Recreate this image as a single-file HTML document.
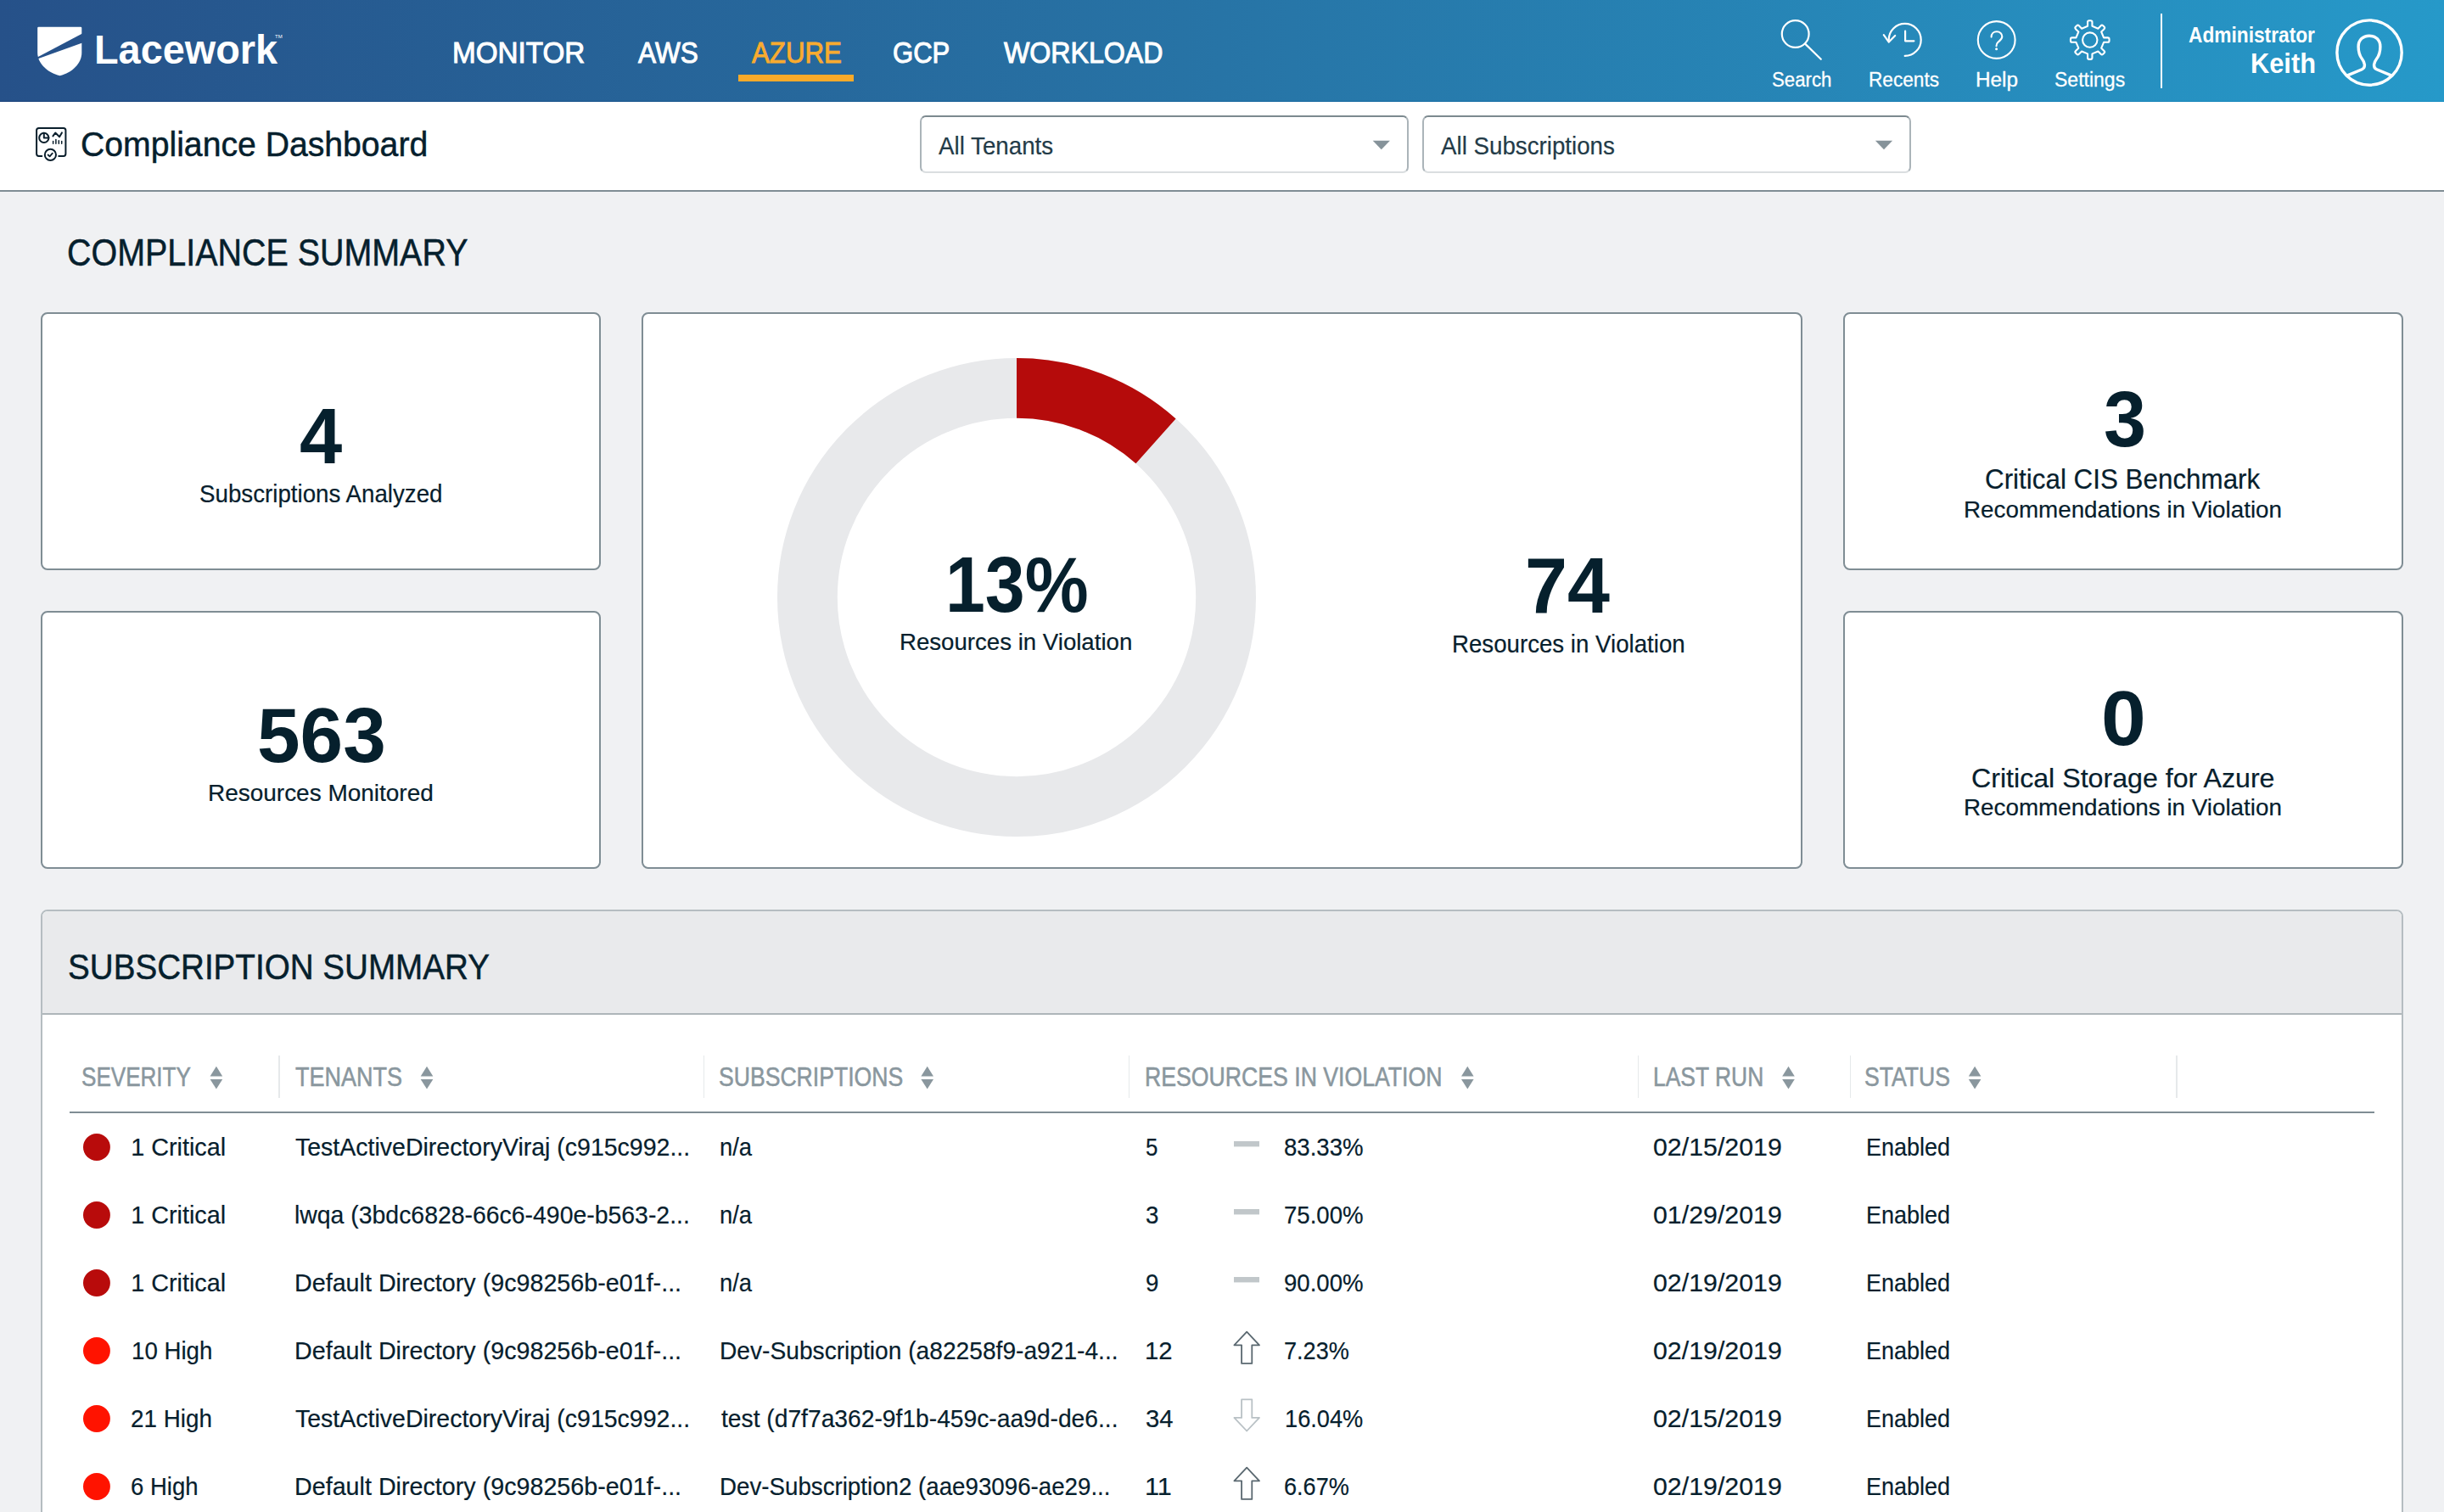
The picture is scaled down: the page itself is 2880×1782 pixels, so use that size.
<!DOCTYPE html><html><head><meta charset="utf-8"><title>Compliance Dashboard</title><style>
*{margin:0;padding:0;box-sizing:border-box}
html,body{width:2880px;height:1782px;overflow:hidden;background:#f0f1f3;font-family:'Liberation Sans', sans-serif}
.a{position:absolute}
.t{position:absolute;line-height:1;white-space:pre;transform-origin:0 0}
.card{position:absolute;background:#fff;border:2px solid #7f8d94;border-radius:8px}
.dd{position:absolute;background:#fff;border:2px solid #abb4b9;border-top-color:#7c898f;border-bottom-color:#dadee0;border-radius:7px}
</style></head><body>
<div class="a" style="left:0;top:0;width:2880px;height:120px;background:linear-gradient(90deg,#265189 0%,#2774a6 50%,#2699c9 100%)"></div>
<div class="a" style="left:0;top:119px;width:2880px;height:1px;background:linear-gradient(90deg,#143e78,#128bc1)"></div>
<div class="a" style="left:0;top:120px;width:2880px;height:104px;background:#fff"></div>
<div class="a" style="left:0;top:224px;width:2880px;height:2px;background:#7f8d94"></div>
<div class="dd" style="left:1084px;top:136px;width:576px;height:68px"></div>
<div class="dd" style="left:1676px;top:136px;width:576px;height:68px"></div>
<div class="card" style="left:48px;top:368px;width:660px;height:304px"></div>
<div class="card" style="left:48px;top:720px;width:660px;height:304px"></div>
<div class="card" style="left:756px;top:368px;width:1368px;height:656px"></div>
<div class="card" style="left:2172px;top:368px;width:660px;height:304px"></div>
<div class="card" style="left:2172px;top:720px;width:660px;height:304px"></div>
<div class="a" style="left:48px;top:1072px;width:2784px;height:760px;background:#fff;border:2px solid #b5bdc1;border-radius:8px;overflow:hidden"><div class="a" style="left:0;top:0;width:2780px;height:122px;background:#e9eaec;border-bottom:2px solid #aeb6ba"></div></div>
<div class="a" style="left:82px;top:1310px;width:2716px;height:2px;background:#7f8d94"></div>
<div class="a" style="left:328.2px;top:1244px;width:1.7px;height:50px;background:#e6e9eb"></div>
<div class="a" style="left:828.8px;top:1244px;width:1.7px;height:50px;background:#e6e9eb"></div>
<div class="a" style="left:1329.8px;top:1244px;width:1.7px;height:50px;background:#e6e9eb"></div>
<div class="a" style="left:1929.8px;top:1244px;width:1.7px;height:50px;background:#e6e9eb"></div>
<div class="a" style="left:2179.6px;top:1244px;width:1.7px;height:50px;background:#e6e9eb"></div>
<div class="a" style="left:2564.2px;top:1244px;width:1.7px;height:50px;background:#e6e9eb"></div>
<svg class="a" style="left:0;top:0" width="2880" height="1782" viewBox="0 0 2880 1782"><path d="M44.2,33 Q44.2,31.7 45.5,31.7 L95,31.7 Q96.3,31.7 96.3,33 L96.3,62 C96.3,75 85,85.5 70.5,89.3 C56,85.5 44.2,75 44.2,62 Z" fill="#fff"/><path d="M97,39.4 L97,50.4 L44,69.6 L44,67.6 Z" fill="#27528a"/><rect x="870" y="88" width="136" height="8" fill="#f8aa2a"/><g fill="none" stroke="#fff" stroke-width="2.2" stroke-linecap="round" stroke-linejoin="round"><circle cx="2115.7" cy="40" r="15.9"/><line x1="2127.4" y1="51.9" x2="2145.8" y2="69.8"/><path d="M2244.7,65.9 A19,19 0 1 0 2225.7,46.9"/><polyline points="2219.8,41.2 2225.8,49.6 2233.2,42"/><polyline points="2245.1,36.6 2245.1,48.3 2255.4,48.3"/><circle cx="2352.7" cy="47" r="21.9" stroke-width="2.1"/><path d="M2346.6,43.6 C2346.6,39.6 2349.3,37.2 2353,37.2 C2356.7,37.2 2359.3,39.8 2359.3,43 C2359.3,46.4 2356.4,48 2354.2,50 C2352.8,51.3 2352.5,52.4 2352.5,54.2" stroke-width="2.1"/></g><circle cx="2352.6" cy="57.8" r="1.5" fill="#fff"/><path d="M2460.05,30.80 L2460.05,26.10 Q2460.05,24.30 2461.85,24.30 L2463.65,24.30 Q2465.45,24.30 2465.45,26.10 L2465.45,30.80 L2472.37,33.66 L2475.69,30.34 Q2476.96,29.07 2478.24,30.34 L2479.51,31.61 Q2480.78,32.89 2479.51,34.16 L2476.19,37.48 L2479.05,44.40 L2483.75,44.40 Q2485.55,44.40 2485.55,46.20 L2485.55,48.00 Q2485.55,49.80 2483.75,49.80 L2479.05,49.80 L2476.19,56.72 L2479.51,60.04 Q2480.78,61.31 2479.51,62.59 L2478.24,63.86 Q2476.96,65.13 2475.69,63.86 L2472.37,60.54 L2465.45,63.40 L2465.45,68.10 Q2465.45,69.90 2463.65,69.90 L2461.85,69.90 Q2460.05,69.90 2460.05,68.10 L2460.05,63.40 L2453.13,60.54 L2449.81,63.86 Q2448.54,65.13 2447.26,63.86 L2445.99,62.59 Q2444.72,61.31 2445.99,60.04 L2449.31,56.72 L2446.45,49.80 L2441.75,49.80 Q2439.95,49.80 2439.95,48.00 L2439.95,46.20 Q2439.95,44.40 2441.75,44.40 L2446.45,44.40 L2449.31,37.48 L2445.99,34.16 Q2444.72,32.89 2445.99,31.61 L2447.26,30.34 Q2448.54,29.07 2449.81,30.34 L2453.13,33.66 Z" fill="none" stroke="#fff" stroke-width="2.1" stroke-linejoin="round"/><circle cx="2462.75" cy="47.1" r="8.7" fill="none" stroke="#fff" stroke-width="2.1"/><rect x="2546" y="16" width="2" height="88" fill="#fff"/><g fill="none" stroke="#fff" stroke-width="3.4" stroke-linejoin="round"><circle cx="2792.05" cy="62.05" r="38.15"/><path d="M2766.3,88.9 L2783.4,81.7 C2785.9,80.6 2786.6,78.6 2786.4,76.1 C2786.2,73.6 2785,71.6 2783.5,69.6 C2780.5,65.6 2779.1,60.5 2779.1,55 C2779.1,47 2784.6,42.2 2792,42.2 C2799.4,42.2 2804.9,47 2804.9,55 C2804.9,60.5 2803.5,65.6 2800.5,69.6 C2799,71.6 2797.8,73.6 2797.6,76.1 C2797.4,78.6 2798.1,80.6 2800.6,81.7 L2817.7,88.9"/></g><g fill="none" stroke="#0b1f2c" stroke-width="2" stroke-linecap="round" stroke-linejoin="round"><path d="M49.3,183.9 L45.8,183.9 Q43.1,183.9 43.1,181.2 L43.1,153.5 Q43.1,150.9 45.8,150.9 L74.8,150.9 Q77.4,150.9 77.4,153.5 L77.4,181.2 Q77.4,183.9 74.8,183.9 L69.2,183.9"/><circle cx="51.8" cy="162.4" r="5.6"/><polyline points="51.8,156.8 51.8,162.4 57.4,162.4"/><polyline points="62.4,160.4 65.2,156.6 70.1,161.2 72.9,156.4"/><circle cx="59.4" cy="182.4" r="6.6"/><polyline points="56.6,182.5 58.6,184.3 61.8,180.7" stroke-width="1.8"/></g><g stroke="#0b1f2c" stroke-width="1.5" stroke-linecap="round"><line x1="62.6" y1="166.6" x2="62.6" y2="169.3"/><line x1="65.9" y1="164.4" x2="65.9" y2="169.3"/><line x1="69.3" y1="165.8" x2="69.3" y2="169.3"/><line x1="72.7" y1="166.6" x2="72.7" y2="169.3"/></g><polygon points="1617.7,165.8 1637.9,165.8 1627.8,176.3" fill="#86939a"/><polygon points="2209.9,165.8 2230.1,165.8 2220.0,176.3" fill="#86939a"/><circle cx="1198" cy="704" r="246.6" fill="none" stroke="#e8e9eb" stroke-width="70.80000000000001"/><path d="M1198,422 A282,282 0 0 1 1385.59,493.45 L1338.50,546.31 A211.2,211.2 0 0 0 1198,492.8 Z" fill="#b50b0b"/><polygon points="254.9,1256.7 262.2,1268.5 247.6,1268.5" fill="#8a979e"/><polygon points="247.6,1272 262.2,1272 254.9,1283.6" fill="#8a979e"/><polygon points="503.0,1256.7 510.3,1268.5 495.7,1268.5" fill="#8a979e"/><polygon points="495.7,1272 510.3,1272 503.0,1283.6" fill="#8a979e"/><polygon points="1092.7,1256.7 1100.0,1268.5 1085.4,1268.5" fill="#8a979e"/><polygon points="1085.4,1272 1100.0,1272 1092.7,1283.6" fill="#8a979e"/><polygon points="1729.3,1256.7 1736.6,1268.5 1722,1268.5" fill="#8a979e"/><polygon points="1722,1272 1736.6,1272 1729.3,1283.6" fill="#8a979e"/><polygon points="2107.5,1256.7 2114.7999999999997,1268.5 2100.2,1268.5" fill="#8a979e"/><polygon points="2100.2,1272 2114.7999999999997,1272 2107.5,1283.6" fill="#8a979e"/><polygon points="2327.1000000000004,1256.7 2334.4,1268.5 2319.8,1268.5" fill="#8a979e"/><polygon points="2319.8,1272 2334.4,1272 2327.1000000000004,1283.6" fill="#8a979e"/><circle cx="113.95" cy="1352" r="15.95" fill="#b80b0b"/><rect x="1454" y="1345" width="30" height="6.4" fill="#c1c7ca"/><circle cx="113.95" cy="1432" r="15.95" fill="#b80b0b"/><rect x="1454" y="1425" width="30" height="6.4" fill="#c1c7ca"/><circle cx="113.95" cy="1512" r="15.95" fill="#b80b0b"/><rect x="1454" y="1505" width="30" height="6.4" fill="#c1c7ca"/><circle cx="113.95" cy="1592" r="15.95" fill="#ff1300"/><circle cx="113.95" cy="1672" r="15.95" fill="#ff1300"/><circle cx="113.95" cy="1752" r="15.95" fill="#ff1300"/><path d="M1469.2,1569.7 L1484,1585.3 L1475.3,1585.3 L1475.3,1606.9 L1463.1,1606.9 L1463.1,1585.3 L1454.4,1585.3 Z" fill="none" stroke="#5a6870" stroke-width="1.8" stroke-linejoin="round"/><path d="M1463.1,1649.3000000000002 L1475.3,1649.3000000000002 L1475.3,1670.9 L1484,1670.9 L1469.2,1686.5000000000002 L1454.4,1670.9 L1463.1,1670.9 Z" fill="none" stroke="#b9c1c5" stroke-width="1.8" stroke-linejoin="round"/><path d="M1469.2,1729.7 L1484,1745.3 L1475.3,1745.3 L1475.3,1766.9 L1463.1,1766.9 L1463.1,1745.3 L1454.4,1745.3 Z" fill="none" stroke="#5a6870" stroke-width="1.8" stroke-linejoin="round"/></svg>
<div class="t" style="left:324px;top:40px;font-size:6px;color:#fff">TM</div>
<div class="t" style="left:110.72px;top:35.2px;font-size:47.17px;font-weight:700;color:#ffffff;transform:scaleX(0.9930);">Lacework</div>
<div class="t" style="left:532.83px;top:45.1px;font-size:34.74px;font-weight:400;color:#ffffff;transform:scaleX(0.9566);-webkit-text-stroke:1.0px #ffffff;">MONITOR</div>
<div class="t" style="left:751.5px;top:45.1px;font-size:34.74px;font-weight:400;color:#ffffff;transform:scaleX(0.9091);-webkit-text-stroke:1.0px #ffffff;">AWS</div>
<div class="t" style="left:885.5px;top:45.1px;font-size:34.74px;font-weight:400;color:#f9ab2f;transform:scaleX(0.8991);-webkit-text-stroke:1.0px #f9ab2f;">AZURE</div>
<div class="t" style="left:1052.41px;top:45.1px;font-size:34.74px;font-weight:400;color:#ffffff;transform:scaleX(0.8944);-webkit-text-stroke:1.0px #ffffff;">GCP</div>
<div class="t" style="left:1183.0px;top:45.1px;font-size:34.74px;font-weight:400;color:#ffffff;transform:scaleX(0.9254);-webkit-text-stroke:1.0px #ffffff;">WORKLOAD</div>
<div class="t" style="left:2087.58px;top:81.9px;font-size:24.29px;font-weight:400;color:#ffffff;transform:scaleX(0.9160);-webkit-text-stroke:0.3px #ffffff;">Search</div>
<div class="t" style="left:2201.53px;top:81.9px;font-size:24.29px;font-weight:400;color:#ffffff;transform:scaleX(0.9326);-webkit-text-stroke:0.3px #ffffff;">Recents</div>
<div class="t" style="left:2327.5px;top:81.9px;font-size:24.29px;font-weight:400;color:#ffffff;transform:scaleX(1.0021);-webkit-text-stroke:0.3px #ffffff;">Help</div>
<div class="t" style="left:2421.05px;top:81.9px;font-size:24.29px;font-weight:400;color:#ffffff;transform:scaleX(0.9477);-webkit-text-stroke:0.3px #ffffff;">Settings</div>
<div class="t" style="left:2579.12px;top:29px;font-size:25.69px;font-weight:700;color:#ffffff;transform:scaleX(0.8844);">Administrator</div>
<div class="t" style="left:2652.47px;top:57.9px;font-size:33.7px;font-weight:700;color:#ffffff;transform:scaleX(0.9137);">Keith</div>
<div class="t" style="left:95.3px;top:150.1px;font-size:41.28px;font-weight:400;color:#06202d;transform:scaleX(0.9489);-webkit-text-stroke:0.5px #06202d;">Compliance Dashboard</div>
<div class="t" style="left:1105.8px;top:158px;font-size:28.92px;font-weight:400;color:#233b48;transform:scaleX(0.9593);-webkit-text-stroke:0.2px #233b48;">All Tenants</div>
<div class="t" style="left:1698.0px;top:158px;font-size:28.92px;font-weight:400;color:#233b48;transform:scaleX(0.9587);-webkit-text-stroke:0.2px #233b48;">All Subscriptions</div>
<div class="t" style="left:79.2px;top:275.7px;font-size:43.9px;font-weight:400;color:#06202d;transform:scaleX(0.8983);-webkit-text-stroke:0.5px #06202d;">COMPLIANCE SUMMARY</div>
<div class="t" style="left:353.03px;top:468px;font-size:93.17px;font-weight:700;color:#06202d;transform:scaleX(0.9700);">4</div>
<div class="t" style="left:234.67px;top:567px;font-size:29.76px;font-weight:400;color:#06202d;transform:scaleX(0.9315);-webkit-text-stroke:0.2px #06202d;">Subscriptions Analyzed</div>
<div class="t" style="left:1113.56px;top:642.7px;font-size:92.88px;font-weight:700;color:#06202d;transform:scaleX(0.9073);">13%</div>
<div class="t" style="left:1060.05px;top:742px;font-size:28.36px;font-weight:400;color:#06202d;transform:scaleX(0.9737);-webkit-text-stroke:0.2px #06202d;">Resources in Violation</div>
<div class="t" style="left:1796.65px;top:644px;font-size:93.31px;font-weight:700;color:#06202d;transform:scaleX(0.9630);">74</div>
<div class="t" style="left:1710.98px;top:743.5px;font-size:30.33px;font-weight:400;color:#06202d;transform:scaleX(0.9118);-webkit-text-stroke:0.2px #06202d;">Resources in Violation</div>
<div class="t" style="left:2478.66px;top:448.4px;font-size:92.88px;font-weight:700;color:#06202d;transform:scaleX(0.9696);">3</div>
<div class="t" style="left:2338.89px;top:548.9px;font-size:32.85px;font-weight:400;color:#06202d;transform:scaleX(0.9555);-webkit-text-stroke:0.2px #06202d;">Critical CIS Benchmark</div>
<div class="t" style="left:2314.04px;top:585.6px;font-size:28.36px;font-weight:400;color:#06202d;transform:scaleX(0.9802);-webkit-text-stroke:0.2px #06202d;">Recommendations in Violation</div>
<div class="t" style="left:2475.76px;top:801.5px;font-size:90.55px;font-weight:700;color:#06202d;transform:scaleX(1.0477);">0</div>
<div class="t" style="left:2322.96px;top:901.5px;font-size:31.59px;font-weight:400;color:#06202d;transform:scaleX(1.0184);-webkit-text-stroke:0.2px #06202d;">Critical Storage for Azure</div>
<div class="t" style="left:2314.05px;top:937.3px;font-size:28.5px;font-weight:400;color:#06202d;transform:scaleX(0.9751);-webkit-text-stroke:0.2px #06202d;">Recommendations in Violation</div>
<div class="t" style="left:303.02px;top:820.8px;font-size:91.57px;font-weight:700;color:#06202d;transform:scaleX(0.9932);">563</div>
<div class="t" style="left:245.41px;top:920.7px;font-size:28.08px;font-weight:400;color:#06202d;transform:scaleX(0.9958);-webkit-text-stroke:0.2px #06202d;">Resources Monitored</div>
<div class="t" style="left:80.41px;top:1118px;font-size:43.02px;font-weight:400;color:#06202d;transform:scaleX(0.8975);-webkit-text-stroke:0.5px #06202d;">SUBSCRIPTION SUMMARY</div>
<div class="t" style="left:96.3px;top:1254.1px;font-size:30.67px;font-weight:400;color:#8a979e;transform:scaleX(0.8503);-webkit-text-stroke:0.55px #8a979e;">SEVERITY</div>
<div class="t" style="left:347.72px;top:1254.1px;font-size:30.67px;font-weight:400;color:#8a979e;transform:scaleX(0.8809);-webkit-text-stroke:0.55px #8a979e;">TENANTS</div>
<div class="t" style="left:847.07px;top:1254.1px;font-size:30.67px;font-weight:400;color:#8a979e;transform:scaleX(0.8672);-webkit-text-stroke:0.55px #8a979e;">SUBSCRIPTIONS</div>
<div class="t" style="left:1349.06px;top:1254.1px;font-size:30.67px;font-weight:400;color:#8a979e;transform:scaleX(0.8694);-webkit-text-stroke:0.55px #8a979e;">RESOURCES IN VIOLATION</div>
<div class="t" style="left:1947.77px;top:1254.1px;font-size:30.67px;font-weight:400;color:#8a979e;transform:scaleX(0.8626);-webkit-text-stroke:0.55px #8a979e;">LAST RUN</div>
<div class="t" style="left:2197.27px;top:1254.1px;font-size:30.67px;font-weight:400;color:#8a979e;transform:scaleX(0.8673);-webkit-text-stroke:0.55px #8a979e;">STATUS</div>
<div class="t" style="left:154.2px;top:1338.0px;font-size:28.78px;font-weight:400;color:#06202d;-webkit-text-stroke:0.2px #06202d;">1 Critical</div>
<div class="t" style="left:348.01px;top:1338.0px;font-size:28.78px;font-weight:400;color:#06202d;transform:scaleX(0.9908);-webkit-text-stroke:0.2px #06202d;">TestActiveDirectoryViraj (c915c992...</div>
<div class="t" style="left:847.89px;top:1338.0px;font-size:28.78px;font-weight:400;color:#06202d;transform:scaleX(0.9526);-webkit-text-stroke:0.2px #06202d;">n/a</div>
<div class="t" style="left:1349.93px;top:1337.0px;font-size:29.8px;font-weight:400;color:#06202d;transform:scaleX(0.8667);-webkit-text-stroke:0.2px #06202d;">5</div>
<div class="t" style="left:1512.57px;top:1337.0px;font-size:29.8px;font-weight:400;color:#06202d;transform:scaleX(0.9263);-webkit-text-stroke:0.2px #06202d;">83.33%</div>
<div class="t" style="left:1948.38px;top:1337.0px;font-size:29.8px;font-weight:400;color:#06202d;transform:scaleX(1.0177);-webkit-text-stroke:0.2px #06202d;">02/15/2019</div>
<div class="t" style="left:2198.52px;top:1338.0px;font-size:28.78px;font-weight:400;color:#06202d;transform:scaleX(0.9382);-webkit-text-stroke:0.2px #06202d;">Enabled</div>
<div class="t" style="left:154.2px;top:1418.0px;font-size:28.78px;font-weight:400;color:#06202d;-webkit-text-stroke:0.2px #06202d;">1 Critical</div>
<div class="t" style="left:347.03px;top:1418.0px;font-size:28.78px;font-weight:400;color:#06202d;transform:scaleX(0.9874);-webkit-text-stroke:0.2px #06202d;">lwqa (3bdc6828-66c6-490e-b563-2...</div>
<div class="t" style="left:847.89px;top:1418.0px;font-size:28.78px;font-weight:400;color:#06202d;transform:scaleX(0.9526);-webkit-text-stroke:0.2px #06202d;">n/a</div>
<div class="t" style="left:1349.87px;top:1417.0px;font-size:29.8px;font-weight:400;color:#06202d;transform:scaleX(0.9286);-webkit-text-stroke:0.2px #06202d;">3</div>
<div class="t" style="left:1512.57px;top:1417.0px;font-size:29.8px;font-weight:400;color:#06202d;transform:scaleX(0.9263);-webkit-text-stroke:0.2px #06202d;">75.00%</div>
<div class="t" style="left:1948.38px;top:1417.0px;font-size:29.8px;font-weight:400;color:#06202d;transform:scaleX(1.0177);-webkit-text-stroke:0.2px #06202d;">01/29/2019</div>
<div class="t" style="left:2198.52px;top:1418.0px;font-size:28.78px;font-weight:400;color:#06202d;transform:scaleX(0.9382);-webkit-text-stroke:0.2px #06202d;">Enabled</div>
<div class="t" style="left:154.2px;top:1498.0px;font-size:28.78px;font-weight:400;color:#06202d;-webkit-text-stroke:0.2px #06202d;">1 Critical</div>
<div class="t" style="left:347.01px;top:1498.0px;font-size:28.78px;font-weight:400;color:#06202d;transform:scaleX(0.9974);-webkit-text-stroke:0.2px #06202d;">Default Directory (9c98256b-e01f-...</div>
<div class="t" style="left:847.89px;top:1498.0px;font-size:28.78px;font-weight:400;color:#06202d;transform:scaleX(0.9526);-webkit-text-stroke:0.2px #06202d;">n/a</div>
<div class="t" style="left:1349.87px;top:1497.0px;font-size:29.8px;font-weight:400;color:#06202d;transform:scaleX(0.9286);-webkit-text-stroke:0.2px #06202d;">9</div>
<div class="t" style="left:1512.57px;top:1497.0px;font-size:29.8px;font-weight:400;color:#06202d;transform:scaleX(0.9263);-webkit-text-stroke:0.2px #06202d;">90.00%</div>
<div class="t" style="left:1948.38px;top:1497.0px;font-size:29.8px;font-weight:400;color:#06202d;transform:scaleX(1.0177);-webkit-text-stroke:0.2px #06202d;">02/19/2019</div>
<div class="t" style="left:2198.52px;top:1498.0px;font-size:28.78px;font-weight:400;color:#06202d;transform:scaleX(0.9382);-webkit-text-stroke:0.2px #06202d;">Enabled</div>
<div class="t" style="left:154.78px;top:1578.0px;font-size:28.78px;font-weight:400;color:#06202d;transform:scaleX(0.9615);-webkit-text-stroke:0.2px #06202d;">10 High</div>
<div class="t" style="left:347.01px;top:1578.0px;font-size:28.78px;font-weight:400;color:#06202d;transform:scaleX(0.9974);-webkit-text-stroke:0.2px #06202d;">Default Directory (9c98256b-e01f-...</div>
<div class="t" style="left:847.84px;top:1578.0px;font-size:28.78px;font-weight:400;color:#06202d;transform:scaleX(0.9789);-webkit-text-stroke:0.2px #06202d;">Dev-Subscription (a82258f9-a921-4...</div>
<div class="t" style="left:1348.83px;top:1577.0px;font-size:29.8px;font-weight:400;color:#06202d;transform:scaleX(0.9833);-webkit-text-stroke:0.2px #06202d;">12</div>
<div class="t" style="left:1512.59px;top:1577.0px;font-size:29.8px;font-weight:400;color:#06202d;transform:scaleX(0.9096);-webkit-text-stroke:0.2px #06202d;">7.23%</div>
<div class="t" style="left:1948.38px;top:1577.0px;font-size:29.8px;font-weight:400;color:#06202d;transform:scaleX(1.0177);-webkit-text-stroke:0.2px #06202d;">02/19/2019</div>
<div class="t" style="left:2198.52px;top:1578.0px;font-size:28.78px;font-weight:400;color:#06202d;transform:scaleX(0.9382);-webkit-text-stroke:0.2px #06202d;">Enabled</div>
<div class="t" style="left:154.13px;top:1658.0px;font-size:28.78px;font-weight:400;color:#06202d;transform:scaleX(0.9670);-webkit-text-stroke:0.2px #06202d;">21 High</div>
<div class="t" style="left:348.01px;top:1658.0px;font-size:28.78px;font-weight:400;color:#06202d;transform:scaleX(0.9908);-webkit-text-stroke:0.2px #06202d;">TestActiveDirectoryViraj (c915c992...</div>
<div class="t" style="left:849.8px;top:1658.0px;font-size:28.78px;font-weight:400;color:#06202d;transform:scaleX(0.9810);-webkit-text-stroke:0.2px #06202d;">test (d7f7a362-9f1b-459c-aa9d-de6...</div>
<div class="t" style="left:1349.82px;top:1657.0px;font-size:29.8px;font-weight:400;color:#06202d;transform:scaleX(0.9806);-webkit-text-stroke:0.2px #06202d;">34</div>
<div class="t" style="left:1513.87px;top:1657.0px;font-size:29.8px;font-weight:400;color:#06202d;transform:scaleX(0.9133);-webkit-text-stroke:0.2px #06202d;">16.04%</div>
<div class="t" style="left:1948.38px;top:1657.0px;font-size:29.8px;font-weight:400;color:#06202d;transform:scaleX(1.0177);-webkit-text-stroke:0.2px #06202d;">02/15/2019</div>
<div class="t" style="left:2198.52px;top:1658.0px;font-size:28.78px;font-weight:400;color:#06202d;transform:scaleX(0.9382);-webkit-text-stroke:0.2px #06202d;">Enabled</div>
<div class="t" style="left:154.14px;top:1738.0px;font-size:28.78px;font-weight:400;color:#06202d;transform:scaleX(0.9556);-webkit-text-stroke:0.2px #06202d;">6 High</div>
<div class="t" style="left:347.01px;top:1738.0px;font-size:28.78px;font-weight:400;color:#06202d;transform:scaleX(0.9974);-webkit-text-stroke:0.2px #06202d;">Default Directory (9c98256b-e01f-...</div>
<div class="t" style="left:847.87px;top:1738.0px;font-size:28.78px;font-weight:400;color:#06202d;transform:scaleX(0.9631);-webkit-text-stroke:0.2px #06202d;">Dev-Subscription2 (aae93096-ae29...</div>
<div class="t" style="left:1348.74px;top:1737.0px;font-size:29.8px;font-weight:400;color:#06202d;transform:scaleX(1.0286);-webkit-text-stroke:0.2px #06202d;">11</div>
<div class="t" style="left:1512.59px;top:1737.0px;font-size:29.8px;font-weight:400;color:#06202d;transform:scaleX(0.9096);-webkit-text-stroke:0.2px #06202d;">6.67%</div>
<div class="t" style="left:1948.38px;top:1737.0px;font-size:29.8px;font-weight:400;color:#06202d;transform:scaleX(1.0177);-webkit-text-stroke:0.2px #06202d;">02/19/2019</div>
<div class="t" style="left:2198.52px;top:1738.0px;font-size:28.78px;font-weight:400;color:#06202d;transform:scaleX(0.9382);-webkit-text-stroke:0.2px #06202d;">Enabled</div>
</body></html>
